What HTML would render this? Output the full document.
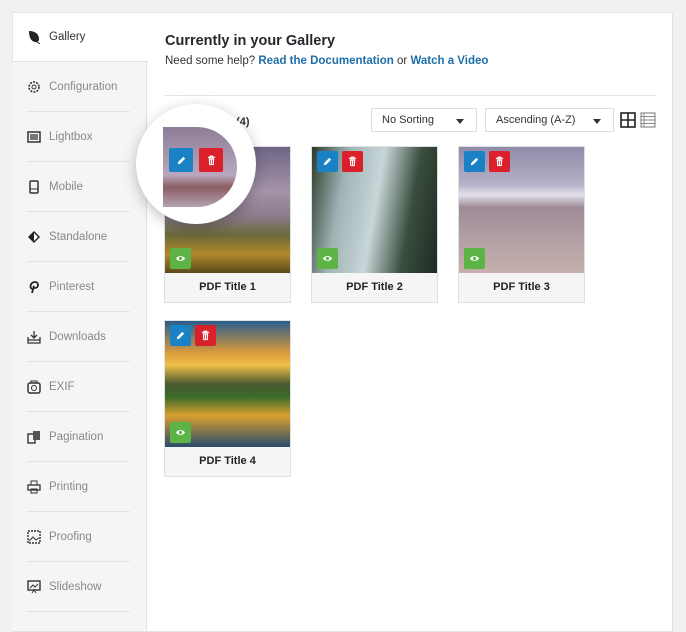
<!DOCTYPE html>
<html><head><meta charset="utf-8"><style>
*{box-sizing:border-box;margin:0;padding:0}
body{width:686px;height:626px;background:#f1f1f1;font-family:"Liberation Sans",sans-serif;position:relative;overflow:hidden}
.panel{position:absolute;left:12px;top:12px;width:661px;height:620px;background:#fff;border:1px solid #e3e3e3}
.side{position:absolute;left:12px;top:61px;width:135px;height:570px;background:#f5f5f5;border-right:1px solid #e3e3e3;border-top:1px solid #e3e3e3}
.item{position:absolute;left:27px;width:103px;height:50px;font-size:11.5px;color:#888;display:flex;align-items:center}
.item svg{width:14px;height:14px;margin-right:8px;flex:none}
.sep{position:absolute;left:27px;width:103px;height:1px;background:#e3e3e3}
h1{position:absolute;left:165px;top:33px;font-size:14.5px;color:#23282d;font-weight:bold}
.help{position:absolute;left:165px;top:55px;font-size:11.5px;color:#333}
.help b{color:#1e6fa6}
.rule{position:absolute;left:165px;top:95px;width:491px;height:1px;background:#e3e3e3}
.sel{position:absolute;top:108px;height:24px;border:1px solid #ddd;font-size:11px;color:#333;padding:5px 10px;background:#fff}
.sel:after{content:"";position:absolute;right:12px;top:10px;border:4px solid transparent;border-top:5px solid #333}
.card{position:absolute;width:127px;height:157px;border:1px solid #e0e0e0;background:#f5f5f5}
.img{position:absolute;left:0;top:0;width:125px;height:126px}
.cap{position:absolute;left:0;top:126px;width:125px;height:29px;text-align:center;line-height:29px;font-size:11px;font-weight:bold;color:#222}
.b{position:absolute;width:21px;height:21px;border-radius:2px;display:flex;align-items:center;justify-content:center}
.b svg{width:11px;height:11px}
.ed{left:5px;top:4px;background:#1a82c4}.dl{left:30px;top:4px;background:#d9202b}.vw{left:5px;top:101px;background:#5db345}
.mag{position:absolute;left:136px;top:104px;width:120px;height:120px;border-radius:50%;background:#fff;box-shadow:0 4px 14px rgba(0,0,0,.25)}
.mi{position:absolute;left:163px;top:127px;width:74px;height:80px;border-radius:0 40px 40px 0;overflow:hidden;background:linear-gradient(#8d7d97,#b9a7bd 60%,#8a5e63 75%,#b5a2b0)}
</style></head><body>
<svg width="0" height="0" style="position:absolute"><defs>
<symbol id="pen" viewBox="0 0 12 12"><path d="M2 10l.5-2.5L8 2l2 2-5.5 5.5z" fill="#fff"/></symbol>
<symbol id="bin" viewBox="0 0 12 12"><path d="M2 2.5h8M4.5 2.5V1.3h3v1.2" stroke="#fff" stroke-width="1.2" fill="none"/><path d="M3 3.5h6l-.5 7.5h-5z" fill="#fff"/><path d="M5 5v5M7 5v5" stroke="#d9202b" stroke-width=".8"/></symbol>
<symbol id="eye" viewBox="0 0 12 12"><path d="M1 6c2-3.5 8-3.5 10 0-2 3.5-8 3.5-10 0z" fill="#fff"/><circle cx="6" cy="6" r="1.8" fill="#5db345"/></symbol>
</defs></svg>
<div class="panel"></div>
<div class="side"></div>
<div class="item" style="top:12px;color:#333"><svg viewBox="0 0 14 14"><path d="M2 1c6 0 10 3 10 8 0 2-1 3-3 3C4 12 2 7 2 1z" fill="#222"/><path d="M10 12l3 2" stroke="#222"/></svg>Gallery</div>
<div class="item" style="top:62px"><svg viewBox="0 0 14 14"><circle cx="7" cy="7" r="5" fill="none" stroke="#333" stroke-width="1.6" stroke-dasharray="2 1.2"/><circle cx="7" cy="7" r="2" fill="none" stroke="#333"/></svg>Configuration</div>
<div class="sep" style="top:111px"></div>
<div class="item" style="top:112px"><svg viewBox="0 0 14 14"><rect x="1" y="2" width="12" height="10" fill="none" stroke="#333" stroke-width="1.5"/><rect x="3" y="4" width="8" height="6" fill="#777"/></svg>Lightbox</div>
<div class="sep" style="top:161px"></div>
<div class="item" style="top:162px"><svg viewBox="0 0 14 14"><rect x="3" y="1" width="8" height="12" rx="1" fill="none" stroke="#333" stroke-width="1.5"/><line x1="3" y1="9" x2="11" y2="9" stroke="#333"/></svg>Mobile</div>
<div class="sep" style="top:211px"></div>
<div class="item" style="top:212px"><svg viewBox="0 0 14 14"><path d="M7 1l6 6-6 6-6-6z" fill="#222"/><path d="M7 3l4 4-4 4z" fill="#fff"/></svg>Standalone</div>
<div class="sep" style="top:261px"></div>
<div class="item" style="top:262px"><svg viewBox="0 0 14 14"><path d="M5 13L7 6M5 9c-3-2-1-7 3-7 4 0 4 6 0 6-1 0-2-1-1-2" fill="none" stroke="#222" stroke-width="1.8"/></svg>Pinterest</div>
<div class="sep" style="top:311px"></div>
<div class="item" style="top:312px"><svg viewBox="0 0 14 14"><path d="M1 7v6h12V7M4 5l3 3 3-3M7 1v7M1 10h12" fill="none" stroke="#333" stroke-width="1.3"/></svg>Downloads</div>
<div class="sep" style="top:361px"></div>
<div class="item" style="top:362px"><svg viewBox="0 0 14 14"><rect x="1" y="3" width="12" height="10" rx="2" fill="none" stroke="#333" stroke-width="1.5"/><circle cx="7" cy="8" r="2.5" fill="none" stroke="#333"/><path d="M4 3V1h6v2" fill="none" stroke="#333"/></svg>EXIF</div>
<div class="sep" style="top:411px"></div>
<div class="item" style="top:412px"><svg viewBox="0 0 14 14"><rect x="1" y="4" width="7" height="9" fill="none" stroke="#333" stroke-width="1.4"/><rect x="6" y="1" width="7" height="9" fill="#555"/></svg>Pagination</div>
<div class="sep" style="top:461px"></div>
<div class="item" style="top:462px"><svg viewBox="0 0 14 14"><rect x="1" y="5" width="12" height="5" fill="none" stroke="#333" stroke-width="1.3"/><rect x="4" y="1" width="6" height="4" fill="none" stroke="#333"/><rect x="4" y="9" width="6" height="4" fill="none" stroke="#333"/></svg>Printing</div>
<div class="sep" style="top:511px"></div>
<div class="item" style="top:512px"><svg viewBox="0 0 14 14"><rect x="1" y="1" width="12" height="12" fill="none" stroke="#333" stroke-width="1.4" stroke-dasharray="2 1"/><path d="M2 11l4-4 3 3 3-2" fill="none" stroke="#333"/></svg>Proofing</div>
<div class="sep" style="top:561px"></div>
<div class="item" style="top:562px"><svg viewBox="0 0 14 14"><rect x="1" y="1" width="12" height="9" fill="none" stroke="#333" stroke-width="1.4"/><path d="M3 8l3-3 2 2 3-3M5 13l2-3 2 3" fill="none" stroke="#333"/></svg>Slideshow</div>
<div class="sep" style="top:611px"></div>

<h1>Currently in your Gallery</h1>
<div class="help">Need some help? <b>Read the Documentation</b> or <b>Watch a Video</b></div>
<div class="rule"></div>
<div style="position:absolute;left:230px;top:116px;font-size:11px;font-weight:bold;color:#333">l (4)</div>
<div class="sel" style="left:371px;width:106px">No Sorting</div>
<div class="sel" style="left:485px;width:129px">Ascending (A-Z)</div>
<svg style="position:absolute;left:620px;top:112px" width="16" height="16" viewBox="0 0 16 16"><rect x="1" y="1" width="14" height="14" fill="none" stroke="#222" stroke-width="1.6"/><path d="M8 1v14M1 8h14" stroke="#222" stroke-width="1.6"/></svg>
<svg style="position:absolute;left:640px;top:112px" width="16" height="16" viewBox="0 0 16 16"><rect x="1" y="1" width="14" height="14" fill="none" stroke="#888" stroke-width="1.2"/><path d="M1 4.5h14M1 8h14M1 11.5h14M4 1v14" stroke="#888"/></svg>

<div class="card" style="left:164px;top:146px"><div class="img" style="background:linear-gradient(#6e6585,#a594aa 35%,#8a7a8a 55%,#6b6a3a 70%,#b08a2a 85%,#5a4a1a)"></div><div class="b vw"><svg><use href="#eye"/></svg></div><div class="cap">PDF Title 1</div></div>
<div class="card" style="left:311px;top:146px"><div class="img" style="background:linear-gradient(100deg,#2c3a2a,#9fb3b5 25%,#c8d6d8 50%,#3a4e3e 75%,#1e2a22),linear-gradient(#cdd8dc,#6b7c7a)"></div><div class="b ed"><svg><use href="#pen"/></svg></div><div class="b dl"><svg><use href="#bin"/></svg></div><div class="b vw"><svg><use href="#eye"/></svg></div><div class="cap">PDF Title 2</div></div>
<div class="card" style="left:458px;top:146px"><div class="img" style="background:linear-gradient(#8f8aa8,#b6b2c8 30%,#e4e0ea 38%,#9c8a96 48%,#b09da3 70%,#c6b0ad)"></div><div class="b ed"><svg><use href="#pen"/></svg></div><div class="b dl"><svg><use href="#bin"/></svg></div><div class="b vw"><svg><use href="#eye"/></svg></div><div class="cap">PDF Title 3</div></div>
<div class="card" style="left:164px;top:320px"><div class="img" style="background:linear-gradient(#2a5d8c,#d89a3a 25%,#f0c04a 35%,#4a5a30 50%,#3a6a2a 60%,#d8a030 75%,#2a4a6a)"></div><div class="b ed"><svg><use href="#pen"/></svg></div><div class="b dl"><svg><use href="#bin"/></svg></div><div class="b vw"><svg><use href="#eye"/></svg></div><div class="cap">PDF Title 4</div></div>

<div class="mag"></div>
<div class="mi"><div class="b" style="left:6px;top:21px;background:#1a82c4;width:24px;height:24px"><svg><use href="#pen"/></svg></div><div class="b" style="left:36px;top:21px;background:#d9202b;width:24px;height:24px"><svg><use href="#bin"/></svg></div></div>
</body></html>
